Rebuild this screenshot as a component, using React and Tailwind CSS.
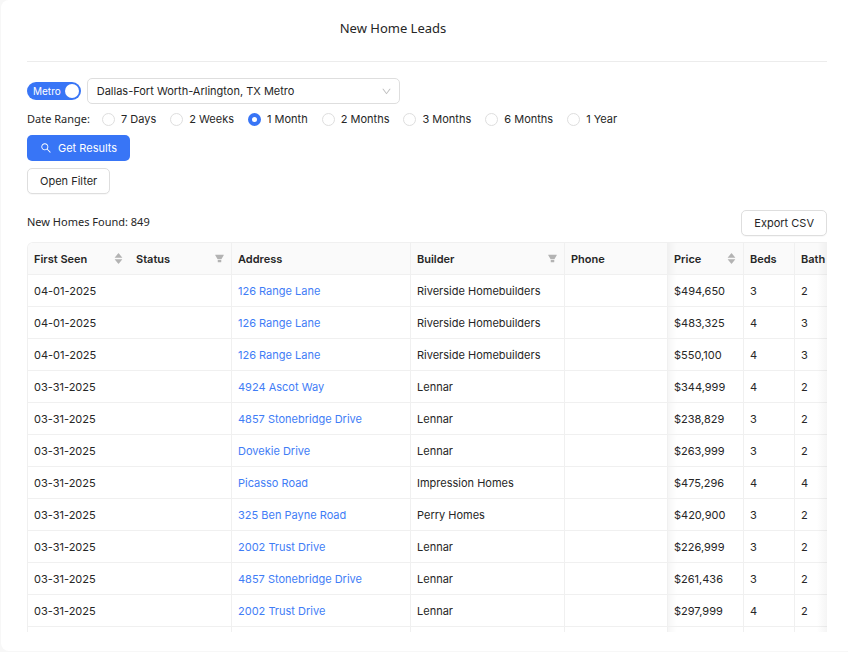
import React, { useState } from 'react';
import { AiOutlineSearch, AiOutlineDown, AiFillCaretUp, AiFillCaretDown, AiFillFilter } from 'react-icons/ai';

const dateRanges = ['7 Days', '2 Weeks', '1 Month', '2 Months', '3 Months', '6 Months', '1 Year'];

const homes = [
    { seen: '04-01-2025', address: '126 Range Lane', builder: 'Riverside Homebuilders', price: '$494,650', beds: 3, baths: 2 },
    { seen: '04-01-2025', address: '126 Range Lane', builder: 'Riverside Homebuilders', price: '$483,325', beds: 4, baths: 3 },
    { seen: '04-01-2025', address: '126 Range Lane', builder: 'Riverside Homebuilders', price: '$550,100', beds: 4, baths: 3 },
    { seen: '03-31-2025', address: '4924 Ascot Way', builder: 'Lennar', price: '$344,999', beds: 4, baths: 2 },
    { seen: '03-31-2025', address: '4857 Stonebridge Drive', builder: 'Lennar', price: '$238,829', beds: 3, baths: 2 },
    { seen: '03-31-2025', address: 'Dovekie Drive', builder: 'Lennar', price: '$263,999', beds: 3, baths: 2 },
    { seen: '03-31-2025', address: 'Picasso Road', builder: 'Impression Homes', price: '$475,296', beds: 4, baths: 4 },
    { seen: '03-31-2025', address: '325 Ben Payne Road', builder: 'Perry Homes', price: '$420,900', beds: 3, baths: 2 },
    { seen: '03-31-2025', address: '2002 Trust Drive', builder: 'Lennar', price: '$226,999', beds: 3, baths: 2 },
    { seen: '03-31-2025', address: '4857 Stonebridge Drive', builder: 'Lennar', price: '$261,436', beds: 3, baths: 2 },
    { seen: '03-31-2025', address: '2002 Trust Drive', builder: 'Lennar', price: '$297,999', beds: 4, baths: 2 }
];

const columns = [
    { title: 'First Seen', width: 'w-[102px]', sorter: true, open: true },
    { title: 'Status', width: 'w-[102px]', filter: true },
    { title: 'Address', width: 'w-[179px]' },
    { title: 'Builder', width: 'w-[154px]', filter: true },
    { title: 'Phone', width: 'w-[103px]' },
    { title: 'Price', width: 'w-[76px]', sorter: true, shade: true },
    { title: 'Beds', width: 'w-[51px]' },
    { title: 'Bath', width: 'w-[64px]' }
];

const buttonClass = 'h-[26px] rounded-[5px] border border-[#dedede] bg-white px-3 shadow-[0_1px_1px_rgba(0,0,0,0.03)]';
const shadeClass = 'shadow-[inset_10px_0_8px_-8px_rgba(5,5,5,0.06)]';

const HeaderCell = ({ column }) => (
    <th
        scope="col"
        className={`${column.width} h-8 border-b border-[#f0f0f0] px-[6px] text-left font-semibold ${column.open ? '' : 'border-r'} ${column.shade ? shadeClass : ''}`}
    >
        <div className="flex items-center justify-between">
            {column.title}
            {column.sorter && (
                <button type="button" aria-label={`Sort by ${column.title}`} className="flex flex-col text-[#b3b3b3]">
                    <AiFillCaretUp className="-mb-[3px] size-[11px]" />
                    <AiFillCaretDown className="-mt-[2px] size-[11px]" />
                </button>
            )}
            {column.filter && (
                <button type="button" aria-label={`Filter by ${column.title}`} className="text-[#b3b3b3]">
                    <AiFillFilter className="size-[11px]" />
                </button>
            )}
        </div>
    </th>
);

const Cell = ({ children, open, shade }) => (
    <td className={`h-8 border-b border-[#f0f0f0] px-[6px] ${open ? '' : 'border-r'} ${shade ? shadeClass : ''}`}>{children}</td>
);

const App = () => {
    const [metro, setMetro] = useState(true);
    const [range, setRange] = useState('1 Month');

    return (
        <div className="h-screen bg-[#f7f7f7] pb-px pl-px font-['Inter',sans-serif] text-[11px] leading-4 text-[#262626]">
            <div className="flex h-full flex-col rounded-l-lg bg-white pb-[19px] pl-[26px] pr-[21px]">
                <header className="border-b border-[#ececec] pb-[23px] pr-[68px] pt-[18px] text-center">
                    <h1 className="font-['Noto_Sans',sans-serif] text-[13px] leading-5">New Home Leads</h1>
                </header>

                <div className="mt-4 flex items-center gap-[6px]">
                    <button
                        type="button"
                        role="switch"
                        aria-checked={metro}
                        onClick={() => setMetro(!metro)}
                        className="flex h-[18px] items-center gap-1 rounded-full bg-[#3875f6] pl-[6px] pr-[2px] text-[10px] text-white"
                    >
                        Metro
                        <span className="size-[14px] rounded-full bg-white" />
                    </button>
                    <div className="relative w-[313px]">
                        <select
                            aria-label="Metro area"
                            className="h-[26px] w-full appearance-none rounded-[5px] border border-[#dedede] bg-white pl-[9px] pr-7"
                        >
                            <option>Dallas-Fort Worth-Arlington, TX Metro</option>
                        </select>
                        <AiOutlineDown className="pointer-events-none absolute right-2 top-2 size-[11px] text-[#bfbfbf]" />
                    </div>
                </div>

                <fieldset className="mt-[7px] flex items-center gap-3">
                    <span className="font-['Noto_Sans',sans-serif]">Date Range:</span>
                    <div className="flex items-center gap-[14px]">
                        {dateRanges.map((label) => (
                            <label key={label} className="flex items-center gap-[6px]">
                                <input
                                    type="radio"
                                    name="range"
                                    checked={range === label}
                                    onChange={() => setRange(label)}
                                    className="size-[13px] appearance-none rounded-full border border-[#dedede] bg-white checked:border-4 checked:border-[#3875f6]"
                                />
                                {label}
                            </label>
                        ))}
                    </div>
                </fieldset>

                <div className="mt-2 flex flex-col items-start gap-[7px]">
                    <button type="button" className="flex h-[26px] items-center gap-[6px] rounded-[5px] bg-[#3875f6] px-[13px] text-white">
                        <AiOutlineSearch className="size-3" />
                        Get Results
                    </button>
                    <button type="button" className={buttonClass}>Open Filter</button>
                </div>

                <div className="mt-4 flex items-start justify-between">
                    <p className="pt-1 font-['Noto_Sans',sans-serif]">New Homes Found: 849</p>
                    <button type="button" className={buttonClass}>Export CSV</button>
                </div>

                <div className="relative mt-[6px] min-h-0 flex-1 overflow-hidden rounded-tl-[6px] border-l border-t border-[#f0f0f0]">
                    <table className="w-full min-w-[831px] table-fixed border-separate border-spacing-0">
                        <thead className="bg-[#fafafa]">
                            <tr>
                                {columns.map((column) => (
                                    <HeaderCell key={column.title} column={column} />
                                ))}
                            </tr>
                        </thead>
                        <tbody>
                            {homes.map((home, index) => (
                                <tr key={index}>
                                    <Cell open>{home.seen}</Cell>
                                    <Cell />
                                    <Cell>
                                        <a href="#" className="text-[#3f7df6]">{home.address}</a>
                                    </Cell>
                                    <Cell>{home.builder}</Cell>
                                    <Cell />
                                    <Cell shade>{home.price}</Cell>
                                    <Cell>{home.beds}</Cell>
                                    <Cell>{home.baths}</Cell>
                                </tr>
                            ))}
                            <tr>
                                {columns.map((column) => (
                                    <Cell key={column.title} open={column.open} shade={column.shade} />
                                ))}
                            </tr>
                        </tbody>
                    </table>
                    <div className="pointer-events-none absolute inset-y-0 right-0 w-[10px] bg-linear-to-l from-black/4 to-transparent" />
                </div>
            </div>
        </div>
    );
};

export default App;
